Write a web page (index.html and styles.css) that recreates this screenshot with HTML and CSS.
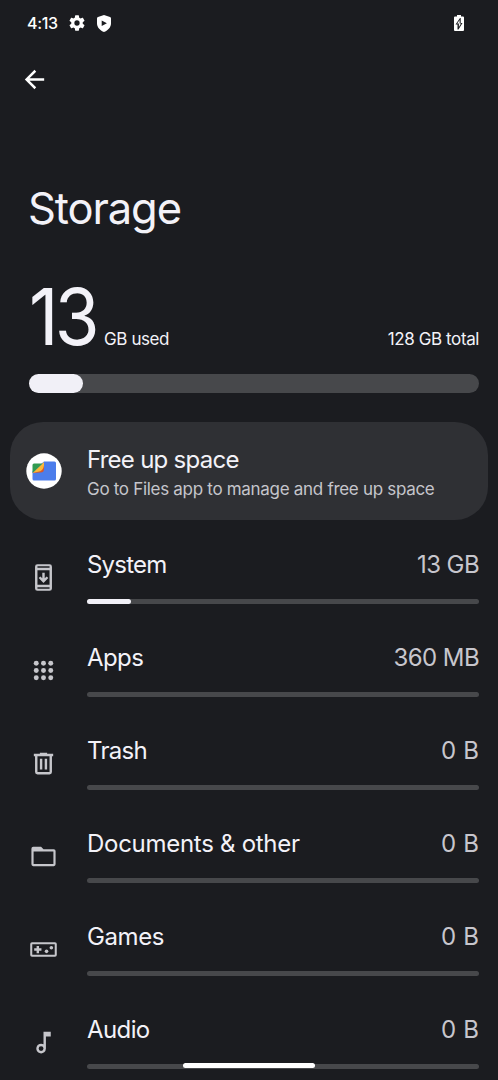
FILE: index.html
```html
<!DOCTYPE html>
<html lang="en">
<head>
<meta charset="utf-8">
<title>Storage</title>
<link rel="stylesheet" href="styles.css">
</head>
<body>
<div class="screen">
  <header class="status">
    <span class="clock">4:13</span>
    <svg class="gear" viewBox="2 2 20 20"><path d="M19.14 12.94c.04-.3.06-.61.06-.94s-.02-.64-.07-.94l2.03-1.58a.49.49 0 0 0 .12-.61l-1.92-3.32a.49.49 0 0 0-.59-.22l-2.39.96a7 7 0 0 0-1.62-.94l-.36-2.54a.48.48 0 0 0-.48-.41h-3.84a.48.48 0 0 0-.47.41l-.36 2.54c-.59.24-1.13.57-1.62.94l-2.39-.96a.48.48 0 0 0-.59.22L2.74 8.87a.48.48 0 0 0 .12.61l2.03 1.58a6 6 0 0 0 0 1.88l-2.03 1.58a.49.49 0 0 0-.12.61l1.92 3.32c.12.22.37.29.59.22l2.39-.96c.5.38 1.03.7 1.62.94l.36 2.54c.05.24.24.41.48.41h3.84c.24 0 .44-.17.47-.41l.36-2.54a7 7 0 0 0 1.62-.94l2.39.96c.22.08.47 0 .59-.22l1.92-3.32a.48.48 0 0 0-.12-.61zM12 15.3a3.3 3.3 0 1 1 0-6.6 3.3 3.3 0 0 1 0 6.6z"/></svg>
    <svg class="shield" viewBox="0 0 14 17"><path fill-rule="evenodd" d="M7 0 13 2.1Q14 2.5 14 3.5V8.5C14 12.5 10.500 15.800 7 17 3.500 15.800 0 12.500 0 8.500V3.500Q0 2.500 1 2.100ZM4.700 5.400V11.100L9.900 8.250Z"/></svg>
    <svg class="battery" viewBox="0 0 10 16"><path fill-rule="evenodd" d="M3 0H7V1.500H9Q10 1.500 10 2.500V15Q10 16 9 16H1Q0 16 0 15V2.500Q0 1.500 1 1.500H3ZM6 3 1.500 9.400H3.500V14.500H4.500L8.500 7.900H6.700V3Z"/><path d="M5.600 5 3.200 8.600H4.900V12L7 8.600H5.600Z"/></svg>
  </header>
  <nav class="toolbar">
    <svg class="back" viewBox="0 0 24 24"><path d="M20 10.900H7.900l5.500-5.400L12 4l-8 8 8 8 1.400-1.500L7.900 13.100H20z"/></svg>
  </nav>
  <h1 class="title">Storage</h1>
  <section class="usage">
    <div class="figures">
      <span class="amount">13</span><span class="unit">GB used</span><span class="total">128 GB total</span>
    </div>
    <div class="meter"><div class="meter-fill"></div></div>
  </section>
  <section class="card">
    <svg class="files" viewBox="0 0 36 36">
      <circle cx="18" cy="18" r="17.700" fill="#fff"/>
      <path d="M18 8.500H28.500Q30 8.500 30 10V26Q30 27.500 28.500 27.500H8Q6.500 27.500 6.500 26V18Z" fill="#4c7deb"/>
      <path d="M6.500 20 18 11V16Q18 19.500 14.500 19.500Z" fill="#d9582b"/>
      <path d="M6.500 20 18 9V12.500Q17 18.500 12 18.800Z" fill="#fbb938"/>
      <path d="M8 10.500H16.500L6.500 20V12Q6.500 10.500 8 10.500Z" fill="#319b50"/>
    </svg>
    <div class="card-body">
      <div class="label card-title">Free up space</div>
      <div class="card-text">Go to Files app to manage and free up space</div>
    </div>
  </section>
  <main class="list">
    <div class="row">
      <svg class="icon" viewBox="0 0 24 24"><path fill-rule="evenodd" d="M7 1H17A2 2 0 0 1 19 3V21A2 2 0 0 1 17 23H7A2 2 0 0 1 5 21V3A2 2 0 0 1 7 1ZM7 2.700V4H17V2.700ZM7 6V18H17V6ZM7 20V21.300H17V20ZM11 8H13V12.700L14.600 11.100 16 12.500 12 16.500 8 12.500 9.400 11.100 11 12.700Z"/></svg>
      <div class="entry"><div class="line"><span class="label sys">System</span><span class="value">13 GB</span></div><div class="bar"><div class="bar-fill"></div></div></div>
    </div>
    <div class="row">
      <svg class="icon" viewBox="0 0 24 24"><circle cx="6" cy="6" r="2.050"/><circle cx="12" cy="6" r="2.050"/><circle cx="18" cy="6" r="2.050"/><circle cx="6" cy="12" r="2.050"/><circle cx="12" cy="12" r="2.050"/><circle cx="18" cy="12" r="2.050"/><circle cx="6" cy="18" r="2.050"/><circle cx="12" cy="18" r="2.050"/><circle cx="18" cy="18" r="2.050"/></svg>
      <div class="entry"><div class="line"><span class="label">Apps</span><span class="value">360 MB</span></div><div class="bar"></div></div>
    </div>
    <div class="row">
      <svg class="icon" viewBox="0 0 24 24"><path fill-rule="evenodd" d="M9 3H15V4H20V6H19V19A2 2 0 0 1 17 21H7A2 2 0 0 1 5 19V6H4V4H9ZM7 6V19H17V6ZM9 8H11V17H9ZM13 8H15V17H13Z"/></svg>
      <div class="entry"><div class="line"><span class="label trash">Trash</span><span class="value zero">0 B</span></div><div class="bar"></div></div>
    </div>
    <div class="row">
      <svg class="icon" viewBox="0 0 24 24"><path fill-rule="evenodd" d="M3.500 4H10L12 6H20.500A1.500 1.500 0 0 1 22 7.500V18.500A1.500 1.500 0 0 1 20.500 20H3.500A1.500 1.500 0 0 1 2 18.500V5.500A1.500 1.500 0 0 1 3.500 4ZM3.800 7.800V18.200H20.200V7.800Z"/></svg>
      <div class="entry"><div class="line"><span class="label docs">Documents &amp; other</span><span class="value zero">0 B</span></div><div class="bar"></div></div>
    </div>
    <div class="row">
      <svg class="icon" viewBox="0 0 24 24"><path fill-rule="evenodd" d="M2.500 6H21.500A1.500 1.500 0 0 1 23 7.500V16.500A1.500 1.500 0 0 1 21.500 18H2.500A1.500 1.500 0 0 1 1 16.500V7.500A1.500 1.500 0 0 1 2.500 6ZM2.700 7.700V16.300H21.300V7.700ZM6.300 9H8.300V11H10.300V13H8.300V15H6.300V13H4.300V11H6.300Z"/><circle cx="14.500" cy="13.500" r="1.500"/><circle cx="18.500" cy="10.500" r="1.500"/></svg>
      <div class="entry"><div class="line"><span class="label games">Games</span><span class="value zero">0 B</span></div><div class="bar"></div></div>
    </div>
    <div class="row">
      <svg class="icon" viewBox="0 0 24 24"><path fill-rule="evenodd" d="M12 3H18V7H14V17A4 4 0 1 1 12 13.550ZM10 15A2 2 0 1 0 10 19 2 2 0 0 0 10 15Z"/></svg>
      <div class="entry"><div class="line"><span class="label">Audio</span><span class="value zero">0 B</span></div><div class="bar"></div></div>
    </div>
  </main>
  <div class="home"></div>
</div>
</body>
</html>
```
FILE: styles.css
```css
* { box-sizing: border-box; }
body { margin: 0; background: #1b1c20; }
svg { display: block; flex: none; }
.screen {
  position: relative;
  width: 498px;
  height: 1080px;
  overflow: hidden;
  background: #1b1c20;
  color: #f3f2f8;
  font-family: Inter, Roboto, sans-serif;
  white-space: nowrap;
}
.status { display: flex; align-items: center; height: 46px; padding: 0 34px 0 27px; fill: #fff; color: #fff; }
.clock { width: 42px; font-size: 16px; font-weight: 500; letter-spacing: -0.3px; }
.gear { width: 16px; height: 16px; }
.shield { width: 14px; height: 17px; margin-left: 12px; }
.battery { width: 10px; height: 16px; margin-left: auto; }
.toolbar { height: 66px; padding: 18.500px 0 0 19.500px; fill: #fff; }
.back { width: 29px; height: 29px; }
.title { margin: 0; padding: 67px 0 0 28px; height: 162px; font-size: 43.500px; font-weight: 400; line-height: 58px; letter-spacing: -1.100px; }
.usage { padding: 0 19px 0 29px; height: 148px; }
.figures { display: flex; align-items: baseline; height: 100px; line-height: 86px; font-size: 17px; }
.amount { width: 75px; font-size: 78px; letter-spacing: -4px; transform: scaleX(0.93); transform-origin: left; }
.unit { letter-spacing: -0.4px; }
.total { margin-left: auto; letter-spacing: -0.4px; }
.meter { height: 19px; border-radius: 10px; background: #47484b; }
.meter-fill { width: 54px; height: 19px; border-radius: 10px; background: #f1f0f7; }
.card { display: flex; align-items: center; gap: 25px; height: 98px; margin: 0 10px; padding: 0 16px; border-radius: 33px; background: #2f3034; }
.files { width: 36px; height: 36px; }
.card-body { padding-top: 6px; }
.card-text { font-size: 17px; line-height: 28px; letter-spacing: -0.3px; color: #c5c5cb; }
.list { padding: 29px 19px 0 29px; }
.row { display: grid; grid-template-columns: 29px 1fr; column-gap: 29px; height: 93px; }
.icon { width: 29px; height: 29px; margin-top: 13.500px; fill: #c6c6cb; }
.line { display: flex; justify-content: space-between; height: 50px; padding-top: 1px; }
.label { font-size: 24px; line-height: 30px; letter-spacing: -0.6px; }
.value { font-size: 24px; line-height: 30px; color: #c7c6cd; letter-spacing: -0.6px; }
.card-title { letter-spacing: -0.740px; }
.sys { letter-spacing: -0.8px; }
.trash { letter-spacing: -0.7px; }
.docs { letter-spacing: -0.280px; }
.games { letter-spacing: -0.4px; }
.zero { letter-spacing: 0.1px; }
.bar { height: 5px; border-radius: 3px; background: #47484b; }
.bar-fill { width: 44px; height: 5px; border-radius: 3px; background: #f1f0f7; }
.home { position: absolute; left: 183px; top: 1063px; width: 132px; height: 5px; border-radius: 3px; background: #fff; }
```
